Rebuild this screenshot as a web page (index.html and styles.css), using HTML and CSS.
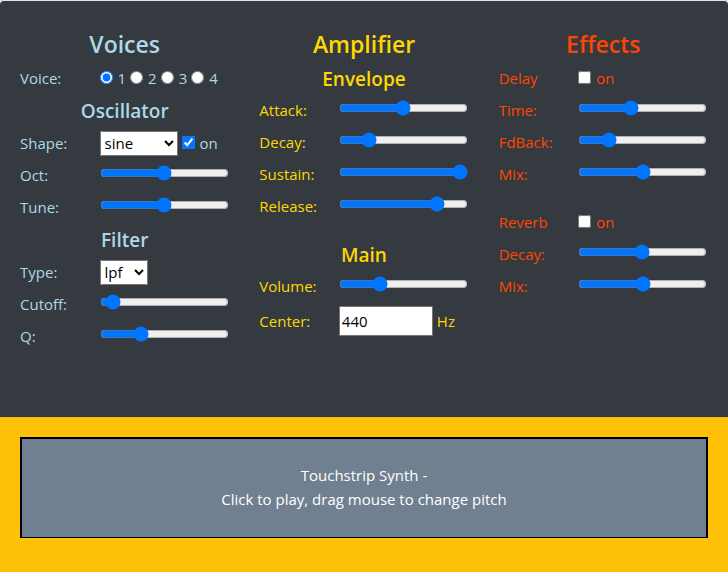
FILE: index.html
```html
<!DOCTYPE html>
<html lang="en">
<head>
<meta charset="utf-8">
<meta name="viewport" content="width=device-width, initial-scale=1">
<title>Touchstrip Synth</title>
<link rel="stylesheet" href="styles.css">
</head>
<body>
<main class="synth">
  <div class="panel">
    <section class="column voices">
      <h2>Voices</h2>
      <div class="row" role="radiogroup" aria-labelledby="voice-label">
        <span id="voice-label">Voice:</span>
        <div class="options">
          <input type="radio" name="voice" id="v1" checked><label for="v1">1</label>
          <input type="radio" name="voice" id="v2"><label for="v2">2</label>
          <input type="radio" name="voice" id="v3"><label for="v3">3</label>
          <input type="radio" name="voice" id="v4"><label for="v4">4</label>
        </div>
      </div>
      <h3>Oscillator</h3>
      <div class="row">
        <label for="shape">Shape:</label>
        <div class="options">
          <select id="shape" class="shape"><option>sine</option><option>square</option><option>triangle</option><option>sawtooth</option></select>
          <input type="checkbox" id="osc-on" checked><label for="osc-on">on</label>
        </div>
      </div>
      <div class="row"><label for="oct">Oct:</label><input type="range" id="oct" value="50"></div>
      <div class="row"><label for="tune">Tune:</label><input type="range" id="tune" value="50"></div>
      <h3>Filter</h3>
      <div class="row">
        <label for="type">Type:</label>
        <div class="options">
          <select id="type" class="type"><option>lpf</option><option>hpf</option><option>bpf</option></select>
        </div>
      </div>
      <div class="row"><label for="cutoff">Cutoff:</label><input type="range" id="cutoff" value="5"></div>
      <div class="row"><label for="q">Q:</label><input type="range" id="q" value="30"></div>
    </section>

    <section class="column amplifier">
      <h2>Amplifier</h2>
      <h3>Envelope</h3>
      <div class="row"><label for="attack">Attack:</label><input type="range" id="attack" value="50"></div>
      <div class="row"><label for="decay">Decay:</label><input type="range" id="decay" value="20"></div>
      <div class="row"><label for="sustain">Sustain:</label><input type="range" id="sustain" value="100"></div>
      <div class="row"><label for="release">Release:</label><input type="range" id="release" value="80"></div>
      <h3 class="spaced">Main</h3>
      <div class="row"><label for="volume">Volume:</label><input type="range" id="volume" value="29"></div>
      <div class="row tall">
        <label for="center">Center:</label>
        <div class="options"><input type="text" inputmode="numeric" id="center" class="number" value="440"><span>Hz</span></div>
      </div>
    </section>

    <section class="column effects">
      <h2>Effects</h2>
      <div class="row">
        <span>Delay</span>
        <div class="options"><input type="checkbox" id="delay-on"><label for="delay-on">on</label></div>
      </div>
      <div class="row"><label for="time">Time:</label><input type="range" id="time" value="40"></div>
      <div class="row"><label for="fdback">FdBack:</label><input type="range" id="fdback" value="20"></div>
      <div class="row"><label for="delay-mix">Mix:</label><input type="range" id="delay-mix" value="50"></div>
      <div class="row spaced">
        <span>Reverb</span>
        <div class="options"><input type="checkbox" id="reverb-on"><label for="reverb-on">on</label></div>
      </div>
      <div class="row"><label for="reverb-decay">Decay:</label><input type="range" id="reverb-decay" value="49"></div>
      <div class="row"><label for="reverb-mix">Mix:</label><input type="range" id="reverb-mix" value="50"></div>
    </section>
  </div>

  <div class="keyboard">
    <div class="touchstrip">Touchstrip Synth -<br>Click to play, drag mouse to change pitch</div>
  </div>
</main>
</body>
</html>
```
FILE: styles.css
```css
* {
  box-sizing: border-box;
}

body {
  margin: 0;
  background: #dfe5e1;
  font-family: "Segoe UI", "Open Sans", "Noto Sans", sans-serif;
  font-size: 15px;
  line-height: 24px;
}

.synth {
  display: flex;
  flex-direction: column;
  min-height: 100vh;
  padding-top: 1px;
}

.panel {
  display: grid;
  grid-template-columns: repeat(3, 1fr);
  gap: 30px;
  padding: 27px 20px 64px;
  background: #343a40;
  border-bottom: 1px solid #2f3033;
  border-radius: 4px 4px 0 0;
}

.voices {
  color: lightblue;
}

.amplifier {
  color: gold;
}

.effects {
  color: orangered;
}

h2,
h3 {
  margin: 0;
  font-weight: 600;
  text-align: center;
}

h2 {
  margin-bottom: 2px;
  font-size: 23px;
  line-height: 32px;
}

h3 {
  height: 33px;
  font-size: 19px;
  line-height: 35px;
}

.amplifier h3 {
  height: 32px;
}

.row {
  display: grid;
  grid-template-columns: 38% 1fr;
  align-items: center;
  height: 32px;
}

.tall {
  height: 38px;
}

.spaced {
  margin-top: 16px;
}

.options {
  display: flex;
  align-items: center;
  gap: 4px;
}

input,
select {
  margin: 0;
  font: inherit;
}

input[type="radio"],
input[type="checkbox"] {
  margin-right: 1px;
  margin-bottom: 2px;
}

input[type="range"] {
  width: 129px;
  margin-bottom: 4px;
}

select {
  height: 25px;
  padding: 0;
  border: 1px solid #767676;
  border-radius: 0;
  background: #fff;
  color: #000;
}

.shape {
  width: 78px;
}

.type {
  width: 48px;
}

.number {
  width: 94px;
  height: 30px;
  padding: 1px 2px;
  border: 1px solid #767676;
  color: #000;
}

.keyboard {
  flex: 1;
  padding: 20px;
  background: #ffc107;
}

.touchstrip {
  padding: 24px 20px 26px;
  border: 2px solid #000;
  border-bottom-width: 1px;
  background: slategray;
  color: #fff;
  text-align: center;
}
```
